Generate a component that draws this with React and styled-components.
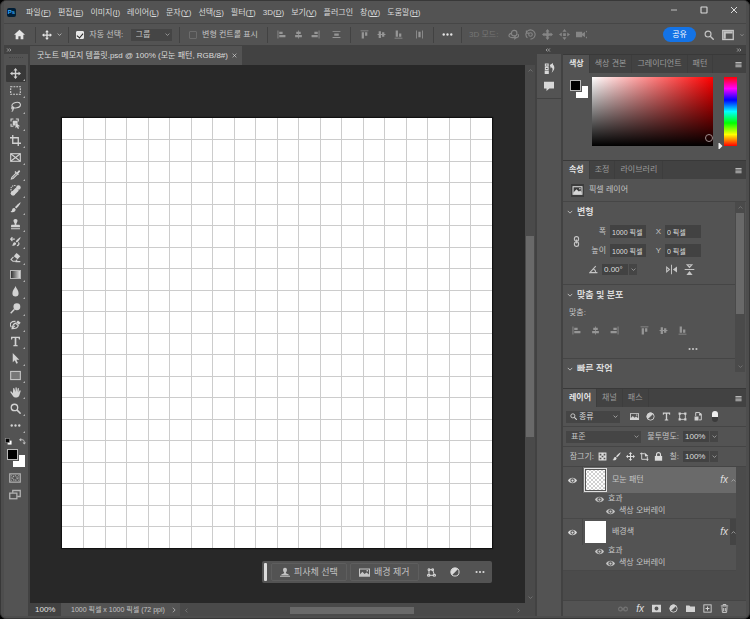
import { useState } from "react";
import styled, { createGlobalStyle, css } from "styled-components";

const line = { fill: "none", stroke: "currentColor", strokeWidth: 1.6 };

const glyphs = {
  home: <path d="M8 1 0 8.4h2.4V15h4v-4.4h3.2V15h4V8.4H16z" />,
  move: (
    <path d="M8 0 5 3.6h2v3.4H3.6V5L0 8l3.6 3V9H7v3.4H5L8 16l3-3.6H9V9h3.4v2L16 8l-3.6-3v2H9V3.6h2z" />
  ),
  marquee: <rect x="1" y="2.5" width="14" height="11" {...line} strokeDasharray="2.6 1.5" />,
  lasso: (
    <g {...line}>
      <ellipse cx="9" cy="6" rx="6.2" ry="4" transform="rotate(-12 9 6)" />
      <circle cx="4" cy="10" r="1.5" />
      <path d="M4 11.5c1 1.5 0 3-1.5 3.7" />
    </g>
  ),
  objectSelect: (
    <>
      <path d="M1.500 5V1.500H5M8.500 1.500H12V5M1.500 8.500V12H5" {...line} />
      <path d="M4 4h7v5L8 7v4H4z" />
      <path d="M8 6.500v8.500l2-1.800 1.500 2.800 1.800-1-1.500-2.700 3-.3z" />
    </>
  ),
  crop: <path d="M4 0v12h12M0 4h12v12" {...line} strokeWidth="1.900" />,
  frame: (
    <g {...line}>
      <rect x="1" y="2.500" width="14" height="11" />
      <path d="m1 2.500 14 11M15 2.500l-14 11" />
    </g>
  ),
  dropper: (
    <>
      <path d="M10 4.500 12.500 1.500c1-1 3 .8 2 2L12 6.200l1 1-1.500 1.500-5-5L8 2.400z" transform="translate(0 .5)" />
      <path d="m8.800 6-6 6-.8 2.500 2.500-.8 6-6" {...line} />
    </>
  ),
  healing: (
    <>
      <rect x="5.500" y="4.500" width="6" height="7" rx="1" transform="rotate(45 8 8)" />
      <circle cx="12.300" cy="3.700" r="3.300" />
      <circle cx="4.500" cy="12" r="3.500" />
      <path d="M8 1C4-.5-.5 4 2 8" {...line} strokeDasharray="2 1.200" />
    </>
  ),
  brush: (
    <path d="M15.500.5c-2 .8-6.800 5-8.200 7.300l1.700 1.700C11.500 7.800 15.200 3 15.500.500zM6.500 8.800c-2.300-.5-3.200 1-3.400 2.600C2.900 13 2 13.800.8 14c2.500 1.600 7.700.8 7.400-3.400z" />
  ),
  stamp: (
    <path d="M8 0C5.500 0 4.500 2 5.300 3.800L6.800 7v1.500H3c-1 0-1.500.7-1.500 1.500v2h13v-2c0-.8-.5-1.500-1.500-1.500H9.200V7l1.500-3.200C11.500 2 10.500 0 8 0zM1.500 13.300h13V15h-13z" />
  ),
  historyBrush: (
    <>
      <path d="M15.500 1.500c-2 .8-6 4.600-7.200 6.500L10 9.500c2.400-1.500 5.200-5.500 5.500-8zM7.300 9c-2-.3-2.600 1-2.800 2.200-.2 1.300-1 2-2 2.200 2 1.300 6.500.6 6.400-2.800z" />
      <path d="M1 4.500h6M3.500 1.500 1 4.500l2.500 3M12 9.500c2.500 2 0 4.500-2 4.500" {...line} />
    </>
  ),
  eraser: (
    <>
      <path d="M9.500 1.500 15 6l-4 4.500L5.500 6z" />
      <path d="M5 7 1.500 10.800 4.300 13.500h4L10.500 11M8 14h7" {...line} />
    </>
  ),
  drop: <path d="M8 0C6.500 4 3.500 6.500 3.500 10.500a4.500 4.800 0 0 0 9 0C12.500 6.500 9.500 4 8 0z" />,
  dodge: (
    <>
      <circle cx="10" cy="5.500" r="5" />
      <path d="M6.500 9 1 15" {...line} strokeWidth="2" />
    </>
  ),
  pen: (
    <>
      <path d="M3 14c1-4 1-7 5-8l4 3.500c-1 4-4 4.500-9 4.500zM3 14l4-4" {...line} />
      <path d="m9 5 2.500-3 4 3.500-2.500 3z" />
      <path d="M2 12C-2 6 3 3 8 3.500" {...line} />
    </>
  ),
  type: <path d="M1.500 1h13v4H13L12.300 2.900H9.200v10.200l2 .5V15H4.800v-1.400l2-.5V2.900H3.700L3 5H1.500z" />,
  arrow: <path d="M4 0v13.500l3-2.800 2.200 5 2.300-1-2.200-4.800H13.500z" />,
  rect: <rect x="1" y="2" width="14" height="12" fill="#777" stroke="currentColor" strokeWidth="1.4" />,
  hand: (
    <path d="M4.200 9 2 6.600C.8 5.800 0 7 .8 8l3.700 5.500C6 16 12 16.500 13.500 12.500L15.500 6c.3-1.200-1.200-1.600-1.700-.5L12.500 8 13 2.300c0-1.300-1.600-1.400-1.900-.1L10.300 7 9.800 1.200C9.600 0 8 0 8 1.200v5.900L6.300 2C5.800.8 4.300 1.300 4.600 2.500z" />
  ),
  search: (
    <g {...line} strokeWidth="1.900">
      <circle cx="6.500" cy="6.500" r="4.700" />
      <path d="m10 10 5.500 5.500" strokeWidth="2.300" />
    </g>
  ),
  dots: (
    <>
      <circle cx="2.500" cy="8" r="1.700" />
      <circle cx="8" cy="8" r="1.700" />
      <circle cx="13.500" cy="8" r="1.700" />
    </>
  ),
  defaults: (
    <>
      <rect x="6" y="6" width="9" height="9" fill="#fff" />
      <rect x="1.500" y="1.500" width="9" height="9" fill="#000" stroke="#aaa" />
    </>
  ),
  swap: (
    <>
      <path d="M4 4h3c4 0 5 2 5 6v1" {...line} strokeWidth="2" />
      <path d="M5 0v8L0 4zM8 10h8l-4 5z" />
    </>
  ),
  quickMask: (
    <>
      <rect x="1" y="2.500" width="14" height="11" {...line} />
      <circle cx="8" cy="8" r="3" {...line} strokeDasharray="1.500 1" />
      <path d="M3 5h1M3 8h1M3 11h1M12 5h1M12 8h1M12 11h1" {...line} />
    </>
  ),
  screenMode: (
    <g {...line} strokeWidth="1.700">
      <path d="M5 5V2h10v8h-4" />
      <rect x="1" y="5.500" width="9.500" height="7.500" />
    </g>
  ),
  alignLeft: <path d="M1 1h1.400v14H1zM4 3h6v4H4zM4 9h11v4H4z" />,
  alignCenter: <path d="M7.300 1h1.400v2H12v4H8.700v2H14v4H8.700v2H7.300v-2H2V9h5.300V7H4V3h3.300z" />,
  alignRight: <path d="M13.600 1H15v14h-1.400zM6 3h6v4H6zM1 9h11v4H1z" />,
  alignTop: <path d="M1 1h14v1.400H1zM3 4h4v11H3zM9 4h4v6H9z" />,
  alignMiddle: <path d="M1 7.300h2V2h4v5.300h2V4h4v3.300h2v1.400h-2V12H9V8.700H7V14H3V8.700H1z" />,
  alignBottom: <path d="M1 13.600h14V15H1zM3 1h4v11H3zM9 6h4v6H9z" />,
  spreadV: <path d="M1 2h14v1.400H1zM4 6h8v4H4zM1 12.600h14V14H1z" />,
  spreadH: <path d="M2 1h1.400v14H2zM6 3h4v10H6zM12.600 1H14v14h-1.400z" />,
  orbit: (
    <g {...line}>
      <circle cx="9" cy="6" r="4" />
      <path d="M5 6C0 8 0 12 6 12.500h7c3-1 3-4 1-5M9 10l3 2.500L9 15" />
    </g>
  ),
  roll: (
    <g {...line}>
      <circle cx="8" cy="8" r="2.600" />
      <path d="M3.500 13A6.700 6.700 0 1 1 8 14.700M2 2v4h4" />
    </g>
  ),
  slide: (
    <path d="M8 0 5 3.500h1.500L6.500 6 3.500 6.500V5L0 8l3.500 3V9.500l3 .5v2.500H5L8 16l3-3.500H9.500V10l3-.5V11L16 8l-3.500-3v1.500l-3-.5V3.500H11z" />
  ),
  drag3d: <path d="M8 0 5 4h6zM8 16l3-4H5zM0 8l4 3V5zM16 8l-4-3v6zM6 6h4v4H6z" />,
  camera: <path d="M0 4h9v3l4-3v8l-4-3v3H0zM14 4l2-2v3zM14 12l2 2v-3z" />,
  workspace: (
    <>
      <rect x="1" y="2" width="14" height="12" {...line} strokeWidth="1.800" />
      <path d="M2 3h12v3H2zM2 6h3v7H2z" />
    </>
  ),
  minimize: <path d="M2 8h12" {...line} />,
  maximize: <rect x="2" y="2" width="12" height="12" rx="1" {...line} strokeWidth="2.200" />,
  close: <path d="m2 2 12 12M14 2 2 14" {...line} strokeWidth="2" />,
  down: <path d="m2 5 6 6 6-6" {...line} strokeWidth="2" />,
  up: <path d="m2 11 6-6 6 6" {...line} strokeWidth="2" />,
  right: <path d="m5 2 6 6-6 6" {...line} strokeWidth="2" />,
  left: <path d="m11 2-6 6 6 6" {...line} strokeWidth="2" />,
  collapse: <path d="M7 4 3 8l4 4M13 4 9 8l4 4" {...line} strokeWidth="2" />,
  expand: <path d="m3 4 4 4-4 4M9 4l4 4-4 4" {...line} strokeWidth="2" />,
  menu: <path d="M1 2h14v3H1zM1 6h14v2H1zM1 9h14v2H1zM1 12h14v2H1z" />,
  history: (
    <>
      <path d="M2 1.500h4v3H2zM2 6.500h4v3H2z" {...line} />
      <path d="M1 11h6v5H1zM8.500 3 13 0v2c3 3 3 8-2 12 2-4 2-6 0-8l-1 2z" />
    </>
  ),
  comment: <path d="M0 1h16v11H8.500L4 16v-4H0z" />,
  image: (
    <path fillRule="evenodd" d="M0 2h16v12H0zm1.500 1.500v7L5 7l3 3 3-2 3.500 3V3.500zM11 4.500h2v2h-2z" />
  ),
  pixelLayer: (
    <>
      <rect x="1.500" y="2.500" width="13" height="11" {...line} />
      <path d="M2 13.500V11l4.500-5L10 9.500 12 8l2 2.500v3z" />
      <circle cx="11.500" cy="5.500" r="1.200" />
    </>
  ),
  link: (
    <g {...line} strokeWidth="1.700">
      <rect x="5" y="1" width="6" height="6.500" rx="2.800" />
      <rect x="5" y="8.500" width="6" height="6.500" rx="2.800" />
      <path d="M8 5v6" />
    </g>
  ),
  linkH: (
    <g {...line} strokeWidth="1.700">
      <rect x="1" y="5" width="6" height="6" rx="2.800" />
      <rect x="9" y="5" width="6" height="6" rx="2.800" />
      <path d="M5 8h6" />
    </g>
  ),
  angle: <path d="M12 2 1.500 13.500H15M8 7c2.500 1 4 3 4 6.500" {...line} strokeWidth="1.900" />,
  flipH: (
    <>
      <path d="M7.300 1h1.400v14H7.300zM10 8l6-4.500v9z" />
      <path d="M1 4.500v7L5 8z" {...line} />
    </>
  ),
  flipV: (
    <>
      <path d="M1 7.300h14v1.400H1zM8 10l4.500 6h-9z" />
      <path d="M4.500 1h7L8 5z" {...line} />
    </>
  ),
  adjust: (
    <>
      <circle cx="8" cy="8" r="6.500" {...line} />
      <path d="M12.600 3.400A6.500 6.500 0 0 0 3.400 12.600z" />
    </>
  ),
  shape: (
    <>
      <rect x="3" y="3" width="10" height="10" {...line} />
      <path d="M1 1h4v4H1zM11 1h4v4h-4zM1 11h4v4H1zM11 11h4v4h-4z" />
    </>
  ),
  smart: (
    <>
      <path d="M3 7V1h7l3 3v10H9" {...line} strokeWidth="1.700" />
      <path d="M1 8h7v7H1zM9 2h4v4H9z" />
    </>
  ),
  checker: <path d="M1 1h14v14H1zM3 3v3h3V3zm7 0v3h3V3zM6.500 6.500v3h3v-3zM3 10v3h3v-3zm7 0v3h3v-3z" fillRule="evenodd" />,
  artboard: (
    <>
      <path d="M3 1v12h12M0 3h8M13 8v8" {...line} />
      <path d="m8 1 7 6-6 1z" />
    </>
  ),
  lock: (
    <>
      <path d="M1.500 7h13v8.500h-13z" />
      <path d="M4.500 7V4.500a3.500 3.500 0 0 1 7 0V7" {...line} strokeWidth="2" />
    </>
  ),
  eye: (
    <path
      fillRule="evenodd"
      d="M0 8c3.500-6.500 12.500-6.500 16 0-3.500 6.500-12.500 6.500-16 0zm8-3.800a3.800 3.800 0 1 0 0 7.600 3.800 3.800 0 0 0 0-7.600zM8 6a2 2 0 1 1 0 4 2 2 0 0 1 0-4z"
    />
  ),
  mask: <path fillRule="evenodd" d="M0 1.500h16v13H0zM8 4.500a3.500 3.500 0 1 0 0 7 3.500 3.500 0 0 0 0-7z" />,
  folder: <path d="M0 2.500h6l1.500 2H16V14H0z" />,
  add: (
    <g {...line}>
      <rect x="1.500" y="1.500" width="13" height="13" />
      <path d="M8 4.500v7M4.500 8h7" strokeWidth="1.800" />
    </g>
  ),
  trash: (
    <>
      <path d="M1.500 3.500h13M5.500 3V1h5v2" {...line} strokeWidth="1.700" />
      <path d="M3.500 5.500 4.300 15h7.400l.8-9.500M6.500 7v6M9.500 7v6" {...line} />
    </>
  ),
  person: <path d="M8 1C5.500 1 4.500 3 5 5.500c.2 1.500 1 2.500 1.500 3V10L2 12v1h12v-1l-4.500-2V8.500c.5-.5 1.300-1.500 1.500-3C11.500 3 10.500 1 8 1zM0 14h16v1.500H0z" />,
  transform: (
    <g {...line} strokeWidth="1.700">
      <path d="M3.500 3v10M3 13h10M4 3h6l3 9" />
      <path d="M1 11.500h4v3H1zM11 11.500h4v3h-4z" />
      <path d="M2 1.500h3v3H2zM8.500 1.500h3v3h-3z" />
    </g>
  ),
};

function Icon({ name, size = 12 }) {
  return (
    <Glyph viewBox="0 0 16 16" width={size} height={size} aria-hidden="true">
      {glyphs[name]}
    </Glyph>
  );
}

const menus = [
  ["파일", "F"],
  ["편집", "E"],
  ["이미지", "I"],
  ["레이어", "L"],
  ["문자", "Y"],
  ["선택", "S"],
  ["필터", "T"],
  ["3D", "D"],
  ["보기", "V"],
  ["플러그인"],
  ["창", "W"],
  ["도움말", "H"],
];

const tools = [
  "move", "marquee", "lasso", "objectSelect", "crop", "frame", "dropper", "healing",
  "brush", "stamp", "historyBrush", "eraser", "gradient", "drop", "dodge", "pen",
  "type", "arrow", "rect", "hand", "search", "dots",
];

const horizontalAlign = ["alignLeft", "alignCenter", "alignRight"];
const verticalAlign = ["alignTop", "alignMiddle", "alignBottom"];
const steps = Array.from({ length: 19 }, (_, i) => `${(i + 1) * 5}%`);

function Dropdown({ label, value, width, grow }) {
  return (
    <SelectBox $w={width} $grow={grow}>
      <Select aria-label={label}>
        <option>{value}</option>
      </Select>
      <Icon name="down" size={5} />
    </SelectBox>
  );
}

function Stepper({ label, value }) {
  return (
    <StepBox>
      <Field aria-label={label} defaultValue={value} $w={26} $large />
      <StepButton aria-label={`${label} 목록`}>
        <Icon name="down" size={5} />
      </StepButton>
    </StepBox>
  );
}

function PanelTabs({ names }) {
  const [active, setActive] = useState(names[0]);
  return (
    <Tabs>
      {names.map((n) => (
        <Tab key={n} $on={n === active} onClick={() => setActive(n)}>
          {n}
        </Tab>
      ))}
      <TabMenu aria-label="패널 메뉴">
        <Icon name="menu" size={7} />
      </TabMenu>
    </Tabs>
  );
}

function Layer({ name, selected, pattern }) {
  return (
    <LayerItem>
      <LayerRow>
        <EyeCell aria-label={`${name} 표시`}>
          <Icon name="eye" size={9} />
        </EyeCell>
        <LayerMain $on={selected}>
          <Thumb $on={selected} $pattern={pattern} />
          <LayerName>{name}</LayerName>
          <Fx>fx</Fx>
        </LayerMain>
        <LayerFold $on={selected} aria-label="효과 접기">
          <Icon name="up" size={5} />
        </LayerFold>
      </LayerRow>
      <Effects>
        <Effect>
          <Icon name="eye" size={9} />
          효과
        </Effect>
        <Effect $sub>
          <Icon name="eye" size={9} />
          색상 오버레이
        </Effect>
      </Effects>
    </LayerItem>
  );
}

export default function App() {
  const [tool, setTool] = useState("move");

  return (
    <Window>
      <Reset />
      <TitleBar>
        <Logo>Ps</Logo>
        <MenuBar>
          {menus.map(([name, key]) => (
            <MenuItem key={name}>
              {name}
              {key && <>(<u>{key}</u>)</>}
            </MenuItem>
          ))}
        </MenuBar>
        <WindowButtons>
          <PlainButton aria-label="최소화"><Icon name="minimize" size={8} /></PlainButton>
          <PlainButton aria-label="최대화"><Icon name="maximize" size={8} /></PlainButton>
          <PlainButton aria-label="닫기"><Icon name="close" size={8} /></PlainButton>
        </WindowButtons>
      </TitleBar>

      <OptionsBar>
        <Group $w={32} $bright>
          <PlainButton aria-label="홈"><Icon name="home" size={11} /></PlainButton>
        </Group>
        <Group $w={33} $bright>
          <Icon name="move" size={10} />
          <Icon name="down" size={5} />
        </Group>
        <Group $w={111}>
          <CheckLabel>
            <Check type="checkbox" defaultChecked />
            자동 선택:
          </CheckLabel>
          <Dropdown label="자동 선택" value="그룹" width={41} />
        </Group>
        <Group $w={88}>
          <CheckLabel>
            <Check type="checkbox" />
            변형 컨트롤 표시
          </CheckLabel>
        </Group>
        <AlignGroup $w={83}>
          {[...horizontalAlign, "spreadV"].map((n) => (
            <PlainButton key={n} aria-label={n}><Icon name={n} size={9} /></PlainButton>
          ))}
        </AlignGroup>
        <AlignGroup $w={83}>
          {[...verticalAlign, "spreadH"].map((n) => (
            <PlainButton key={n} aria-label={n}><Icon name={n} size={9} /></PlainButton>
          ))}
        </AlignGroup>
        <Group $w={28} $bright>
          <PlainButton aria-label="더 보기"><Icon name="dots" size={11} /></PlainButton>
        </Group>
        <Modes>
          <Faint>3D 모드:</Faint>
          {["orbit", "roll", "slide", "drag3d", "camera"].map((n) => (
            <PlainButton key={n} aria-label={n}><Icon name={n} size={11} /></PlainButton>
          ))}
        </Modes>
        <Share>공유</Share>
        <PlainButton aria-label="검색"><Icon name="search" size={10} /></PlainButton>
        <PlainButton aria-label="작업 영역"><Icon name="workspace" size={12} /></PlainButton>
        <Icon name="down" size={4} />
      </OptionsBar>

      <Workspace>
        <ToolPanel>
          <Strip><Icon name="expand" size={6} /></Strip>
          <Grip />
          <ToolList>
            {tools.map((t) => (
              <Tool key={t} $on={t === tool} onClick={() => setTool(t)} aria-label={t}>
                {t === "gradient" ? <GradientIcon /> : <Icon name={t} size={11} />}
              </Tool>
            ))}
          </ToolList>
          <SwatchHead>
            <Icon name="defaults" size={7} />
            <Icon name="swap" size={7} />
          </SwatchHead>
          <Swatches />
          <ModeButton aria-label="빠른 마스크"><Icon name="quickMask" size={12} /></ModeButton>
          <ModeButton aria-label="화면 모드"><Icon name="screenMode" size={12} /></ModeButton>
        </ToolPanel>

        <Document>
          <DocTabs>
            <DocTab>
              굿노트 메모지 템플릿.psd @ 100% (모눈 패턴, RGB/8#)
              <PlainButton aria-label="문서 닫기"><Icon name="close" size={5} /></PlainButton>
            </DocTab>
          </DocTabs>
          <CanvasRow>
            <Stage>
              <Artboard>
                {steps.map((s) => (
                  <g key={s} stroke="#cccccc" shapeRendering="crispEdges">
                    <line x1={s} x2={s} y1="0" y2="100%" />
                    <line y1={s} y2={s} x1="0" x2="100%" />
                  </g>
                ))}
              </Artboard>
              <TaskBar>
                <TaskGrip />
                <TaskButton><Icon name="person" size={10} />피사체 선택</TaskButton>
                <TaskButton><Icon name="image" size={11} />배경 제거</TaskButton>
                <TaskIcons>
                  <PlainButton aria-label="변형"><Icon name="transform" size={9} /></PlainButton>
                  <PlainButton aria-label="조정"><Icon name="adjust" size={10} /></PlainButton>
                  <PlainButton aria-label="옵션"><Icon name="dots" size={10} /></PlainButton>
                </TaskIcons>
              </TaskBar>
            </Stage>
            <VTrack $pad={161}>
              <Icon name="up" size={5} />
              <VThumb $h={201} />
              <Icon name="down" size={5} />
            </VTrack>
          </CanvasRow>
          <StatusBar>
            <Zoom>100%</Zoom>
            <Info>
              1000 픽셀 x 1000 픽셀 (72 ppi)
              <Icon name="right" size={6} />
            </Info>
            <HTrack>
              <Icon name="left" size={5} />
              <HThumb />
              <Icon name="right" size={5} />
            </HTrack>
          </StatusBar>
        </Document>

        <Dock>
          <Strip $center><Icon name="collapse" size={6} /></Strip>
          <DockIcons>
            <PlainButton aria-label="작업 내역"><Icon name="history" size={11} /></PlainButton>
            <PlainButton aria-label="댓글"><Icon name="comment" size={10} /></PlainButton>
          </DockIcons>
        </Dock>

        <Panels>
          <Strip $end><Icon name="expand" size={6} /></Strip>

          <PanelTabs names={["색상", "색상 견본", "그레이디언트", "패턴"]} />
          <ColorBody>
            <Swatches />
            <ColorField><Picker /></ColorField>
            <HuePointer viewBox="0 0 4 6"><path d="M0 0h1l3 3-3 3H0z" /></HuePointer>
            <Hue />
          </ColorBody>

          <PanelTabs names={["속성", "조정", "라이브러리"]} />
          <KindRow>
            <KindIcon><Icon name="pixelLayer" size={11} /></KindIcon>
            픽셀 레이어
          </KindRow>
          <Properties>
            <Sections>
              <Section>
                <SectionTitle><Icon name="down" size={6} />변형</SectionTitle>
                <TransformGrid>
                  <LinkCell><Icon name="link" size={11} /></LinkCell>
                  <label htmlFor="w">폭</label>
                  <Field id="w" defaultValue="1000 픽셀" />
                  <label htmlFor="x">X</label>
                  <Field id="x" defaultValue="0 픽셀" />
                  <label htmlFor="h">높이</label>
                  <Field id="h" defaultValue="1000 픽셀" />
                  <label htmlFor="y">Y</label>
                  <Field id="y" defaultValue="0 픽셀" />
                </TransformGrid>
                <AngleRow>
                  <Icon name="angle" size={9} />
                  <Stepper label="각도" value="0.00°" />
                  <Flips>
                    <PlainButton aria-label="가로로 뒤집기"><Icon name="flipH" size={11} /></PlainButton>
                    <PlainButton aria-label="세로로 뒤집기"><Icon name="flipV" size={11} /></PlainButton>
                  </Flips>
                </AngleRow>
              </Section>
              <Section>
                <SectionTitle><Icon name="down" size={6} />맞춤 및 분포</SectionTitle>
                <AlignLabel>맞춤:</AlignLabel>
                <AlignRow>
                  {horizontalAlign.map((n) => (
                    <PlainButton key={n} aria-label={n}><Icon name={n} size={9} /></PlainButton>
                  ))}
                  <Spacer />
                  {verticalAlign.map((n) => (
                    <PlainButton key={n} aria-label={n}><Icon name={n} size={9} /></PlainButton>
                  ))}
                </AlignRow>
                <MoreRow>
                  <PlainButton aria-label="더 보기"><Icon name="dots" size={10} /></PlainButton>
                </MoreRow>
              </Section>
              <Section>
                <SectionTitle><Icon name="down" size={6} />빠른 작업</SectionTitle>
              </Section>
            </Sections>
            <VTrack $pad={1}>
              <Icon name="up" size={5} />
              <VThumb $h={101} />
              <Icon name="down" size={5} />
            </VTrack>
          </Properties>

          <PanelTabs names={["레이어", "채널", "패스"]} />
          <LayerTools>
            <FilterBox>
              <Icon name="search" size={7} />
              <Dropdown label="필터" value="종류" grow />
            </FilterBox>
            <FilterIcons>
              {["image", "adjust", "type", "shape", "smart"].map((n) => (
                <PlainButton key={n} aria-label={n}><Icon name={n} size={9} /></PlainButton>
              ))}
            </FilterIcons>
            <Toggle aria-label="필터 켜기" />
          </LayerTools>
          <LayerTools>
            <Dropdown label="혼합 모드" value="표준" width={75} />
            <ValueLabel $w={34}>불투명도:</ValueLabel>
            <Stepper label="불투명도" value="100%" />
          </LayerTools>
          <LayerTools>
            <ValueLabel $w={28}>잠그기:</ValueLabel>
            <LockIcons>
              {["checker", "brush", "move", "artboard", "lock"].map((n) => (
                <PlainButton key={n} aria-label={n}><Icon name={n} size={9} /></PlainButton>
              ))}
            </LockIcons>
            <ValueLabel $w={12}>칠:</ValueLabel>
            <Stepper label="칠" value="100%" />
          </LayerTools>
          <LayerArea>
            <LayerList>
              <Layer name="모눈 패턴" selected pattern />
              <Layer name="배경색" />
            </LayerList>
          </LayerArea>
          <LayerFooter>
            <Faint><Icon name="linkH" size={10} /></Faint>
            <FooterFx>fx</FooterFx>
            {["mask", "adjust", "folder", "add", "trash"].map((n) => (
              <PlainButton key={n} aria-label={n}><Icon name={n} size={9} /></PlainButton>
            ))}
          </LayerFooter>
        </Panels>
      </Workspace>
    </Window>
  );
}

const Reset = createGlobalStyle`
  * {
    box-sizing: border-box;
  }
  body {
    margin: 0;
    background: #000;
  }
  button, input, select {
    font: inherit;
    color: inherit;
    border: 0;
    padding: 0;
    margin: 0;
    background: none;
    border-radius: 0;
    appearance: none;
  }
  button {
    cursor: pointer;
  }
`;

const Glyph = styled.svg`
  display: block;
  flex: none;
  fill: currentColor;
`;

const Window = styled.div`
  min-height: 100vh;
  display: flex;
  flex-direction: column;
  padding: 0 3px 2px;
  border: 1px solid #383838;
  border-radius: 6px;
  overflow: hidden;
  background: #4d4d4d;
  color: #c4c4c4;
  font-family: "Liberation Sans", "Noto Sans CJK KR", sans-serif;
  font-size: 8px;
  line-height: 12px;
  white-space: nowrap;
`;

const TitleBar = styled.header`
  height: 22px;
  flex: none;
  display: flex;
  align-items: center;
  background: #535353;
  padding: 1px 0 0 3px;
`;

const Logo = styled.div`
  width: 9px;
  height: 9px;
  border-radius: 2px;
  background: #001e36;
  color: #31a8ff;
  font-size: 6px;
  font-weight: bold;
  line-height: 9px;
  text-align: center;
`;

const MenuBar = styled.nav`
  display: flex;
  gap: 7px;
  margin-left: 10px;
`;

const MenuItem = styled.button`
  color: #dadada;
`;

const WindowButtons = styled.div`
  display: flex;
  gap: 22px;
  margin-left: auto;
  padding: 0 8px 5px 0;
  color: #dcdcdc;
`;

const PlainButton = styled.button`
  display: flex;
  align-items: center;
  justify-content: center;
`;

const OptionsBar = styled.div`
  height: 23px;
  flex: none;
  display: flex;
  align-items: center;
  background: #535353;
  border-top: 1px solid #464646;
  border-bottom: 1px solid #424242;
  padding-right: 2px;

  > ${PlainButton} {
    margin-left: 8px;
  }
  > ${Glyph} {
    margin-left: 6px;
  }
`;

const Group = styled.div`
  width: ${(p) => p.$w}px;
  height: 16px;
  flex: none;
  display: flex;
  align-items: center;
  justify-content: space-evenly;
  border-right: 1px solid #424242;
  color: ${(p) => (p.$bright ? "#e4e4e4" : "#c4c4c4")};
`;

const AlignGroup = styled(Group)`
  justify-content: flex-start;
  gap: 8px;
  padding: 0 9px;
  color: #969696;

  > :last-child {
    margin-left: auto;
  }
`;

const CheckLabel = styled.label`
  display: flex;
  align-items: center;
  gap: 5px;
`;

const Check = styled.input`
  width: 8px;
  height: 8px;
  border: 1px solid #6c6c6c;
  border-radius: 1px;
  display: flex;
  justify-content: center;

  &:checked {
    background: #e6e6e6;
    border-color: #e6e6e6;
  }
  &:checked::after {
    content: "";
    width: 3px;
    height: 5px;
    border: solid #222;
    border-width: 0 1px 1px 0;
    transform: rotate(40deg);
  }
`;

const SelectBox = styled.div`
  width: ${(p) => (p.$grow ? "auto" : `${p.$w}px`)};
  flex: ${(p) => (p.$grow ? 1 : "none")};
  height: 12px;
  display: flex;
  align-items: center;
  background: #454545;
  padding: 0 2px 0 5px;
`;

const Select = styled.select`
  flex: 1;
  min-width: 0;
  height: 12px;
  line-height: 12px;
`;

const Modes = styled.div`
  display: flex;
  align-items: center;
  gap: 6px;
  padding-left: 7px;
  color: #858585;
`;

const Faint = styled.span`
  color: #757575;
  margin-right: 4px;
`;

const Share = styled.button`
  width: 33px;
  height: 15px;
  border-radius: 8px;
  background: #1473e6;
  color: #fff;
  margin-left: auto;
`;

const Workspace = styled.main`
  flex: 1;
  display: flex;
  background: #424242;
`;

const Strip = styled.div`
  height: 8px;
  flex: none;
  display: flex;
  align-items: center;
  justify-content: ${(p) => (p.$end ? "flex-end" : p.$center ? "center" : "flex-start")};
  background: #424242;
  padding: 0 4px 0 2px;
`;

const ToolPanel = styled.aside`
  width: 24px;
  flex: none;
  display: flex;
  flex-direction: column;
  background: #535353;
`;

const Grip = styled.div`
  height: 3px;
  margin: 3px 5px 5px;
  border-top: 1px dotted #444;
`;

const ToolList = styled.div`
  height: 369px;
  display: grid;
  grid-auto-rows: 1fr;
  padding: 0 2px;
`;

const Tool = styled.button`
  display: flex;
  align-items: center;
  padding-left: 4px;
  border-radius: 1px;
  background: ${(p) => (p.$on ? "#383838" : "none")};
  color: #d2d2d2;

  &::after {
    content: "";
    align-self: flex-end;
    margin: 0 0 1px 2px;
    border: 1px solid;
    border-color: transparent #b0b0b0 #b0b0b0 transparent;
  }
`;

const GradientIcon = styled.span`
  width: 11px;
  height: 9px;
  border: 1px solid #b5b5b5;
  background: linear-gradient(90deg, #333, #ddd);
`;

const SwatchHead = styled.div`
  display: flex;
  justify-content: space-between;
  padding: 4px 2px 2px 1px;
`;

const Swatches = styled.div`
  width: 18px;
  height: 18px;
  flex: none;
  margin: 2px 2px 2px 3px;
  background:
    linear-gradient(#000, #000) 1px 1px / 9px 9px no-repeat,
    linear-gradient(#b8b8b8, #b8b8b8) 0 0 / 11px 11px no-repeat,
    linear-gradient(#535353, #535353) 0 0 / 12px 12px no-repeat,
    linear-gradient(#fff, #fff) 6px 6px / 12px 12px no-repeat;
`;

const ModeButton = styled.button`
  height: 17px;
  display: flex;
  align-items: center;
  padding-left: 5px;
  color: #b4b4b4;
`;

const Document = styled.section`
  flex: 1;
  min-width: 0;
  display: flex;
  flex-direction: column;
  margin: 0 2px;
`;

const DocTabs = styled.div`
  height: 19px;
  flex: none;
  display: flex;
`;

const DocTab = styled.div`
  display: flex;
  align-items: center;
  gap: 4px;
  padding: 0 5px 0 7px;
  background: #535353;
  color: #dcdcdc;
`;

const CanvasRow = styled.div`
  flex: 1;
  display: flex;
`;

const Stage = styled.div`
  flex: 1;
  display: flex;
  flex-direction: column;
  align-items: flex-end;
  background: #282828;
  padding: 53px 33px 20px 32px;
`;

const Artboard = styled.svg`
  width: 100%;
  aspect-ratio: 1;
  background: #fff;
  box-shadow: 0 0 1px 1px #111;
`;

const TaskBar = styled.div`
  height: 22px;
  width: 230px;
  display: flex;
  align-items: center;
  gap: 3px;
  margin-top: 13px;
  padding: 0 2px;
  border-radius: 2px;
  background: #535353;
`;

const TaskGrip = styled.div`
  width: 3px;
  height: 18px;
  border-radius: 1px;
  background: #dcdcdc;
  margin-right: 1px;
`;

const TaskButton = styled.button`
  height: 18px;
  display: flex;
  align-items: center;
  gap: 4px;
  padding: 0 8px;
  border: 1px solid #5e5e5e;
  border-radius: 2px;
  font-size: 9px;
`;

const TaskIcons = styled.div`
  flex: 1;
  display: flex;
  justify-content: space-between;
  padding: 0 5px;
  color: #dadada;
`;

const VTrack = styled.div`
  width: 10px;
  flex: none;
  display: flex;
  flex-direction: column;
  align-items: center;
  padding: 3px 0;
  background: #4a4a4a;
  color: #8a8a8a;

  > :nth-child(2) {
    margin-top: ${(p) => p.$pad + 2}px;
  }
  > :last-child {
    margin-top: auto;
  }
`;

const VThumb = styled.div`
  width: 8px;
  height: ${(p) => p.$h}px;
  background: #696969;
`;

const StatusBar = styled.footer`
  height: 13px;
  flex: none;
  display: flex;
  align-items: stretch;
  background: #4a4a4a;
  line-height: 14px;
`;

const Zoom = styled.div`
  width: 31px;
  padding-left: 5px;
  background: #424242;
  color: #e0e0e0;
`;

const Info = styled.div`
  width: 119px;
  display: flex;
  align-items: center;
  justify-content: space-between;
  padding: 1px 3px 0 10px;
  background: #535353;
  font-size: 7px;
`;

const HTrack = styled.div`
  flex: 1;
  display: flex;
  align-items: center;
  padding: 1px 14px 0 4px;
  color: #8a8a8a;

  > :last-child {
    margin-left: auto;
  }
`;

const HThumb = styled.div`
  width: 124px;
  height: 7px;
  margin-left: 101px;
  background: #696969;
`;

const Dock = styled.aside`
  width: 24px;
  flex: none;
  margin-right: 2px;
  background: #535353;
`;

const DockIcons = styled.div`
  display: flex;
  flex-direction: column;
  align-items: center;
  gap: 7px;
  padding: 9px 0 7px;
  border-bottom: 1px solid #424242;
  color: #d8d8d8;
`;

const Panels = styled.aside`
  width: 183px;
  flex: none;
  display: flex;
  flex-direction: column;
  background: #535353;
`;

const Tabs = styled.div`
  height: 19px;
  flex: none;
  display: flex;
  background: #424242;
  border-top: 1px solid #393939;
`;

const Tab = styled.button`
  padding: 0 5px;
  border-right: 1px solid #3d3d3d;
  color: #9c9c9c;
  ${(p) =>
    p.$on &&
    css`
      padding-left: 6px;
      background: #535353;
      color: #e6e6e6;
      font-weight: bold;
    `}
`;

const TabMenu = styled(PlainButton)`
  margin-left: auto;
  padding-right: 4px;
  color: #b8b8b8;
`;

const ColorBody = styled.div`
  height: 87px;
  flex: none;
  display: flex;
  align-items: flex-start;
  padding: 4px 9px 0 4px;

  ${Swatches} {
    margin-top: 3px;
  }
`;

const ColorField = styled.div`
  flex: 1;
  height: 69px;
  margin-left: 2px;
  display: flex;
  align-items: flex-end;
  justify-content: flex-end;
  background: linear-gradient(transparent, #000), linear-gradient(90deg, #fff, #f00);
`;

const Picker = styled.div`
  width: 8px;
  height: 8px;
  margin-bottom: 4px;
  border: 1px solid #a09090;
  border-radius: 50%;
`;

const HuePointer = styled.svg`
  width: 5px;
  height: 6px;
  margin: 66px 1px 0 5px;
  fill: #eee;
`;

const Hue = styled.div`
  width: 13px;
  height: 69px;
  background: linear-gradient(#f00, #f0f, #00f, #0ff, #0f0, #ff0, #f00);
`;

const KindRow = styled.div`
  height: 23px;
  flex: none;
  display: flex;
  align-items: center;
  gap: 5px;
  padding-left: 8px;
  border-bottom: 1px solid #464646;
`;

const KindIcon = styled.span`
  padding: 1px;
  background: #3c3c3c;
  color: #d6d6d6;
`;

const Properties = styled.div`
  height: 170px;
  flex: none;
  display: flex;
  margin: 0 1px 16px 0;
  overflow: hidden;
`;

const Sections = styled.div`
  flex: 1;
`;

const Section = styled.section`
  border-bottom: 1px solid #454545;
`;

const SectionTitle = styled.h3`
  display: flex;
  align-items: center;
  gap: 4px;
  margin: 0;
  padding: 4px 0 3px 4px;
  font-size: 9px;
  color: #dadada;
`;

const TransformGrid = styled.div`
  display: grid;
  grid-template-columns: 12px 19px 36px 11px 36px;
  grid-auto-rows: 13px;
  gap: 6px 4px;
  padding: 4px 0 0 8px;
  line-height: 14px;
  text-align: right;
`;

const LinkCell = styled.div`
  grid-row: span 2;
  display: flex;
  align-items: center;
`;

const Field = styled.input`
  width: ${(p) => (p.$w ? `${p.$w}px` : "100%")};
  height: 100%;
  padding-left: 2px;
  background: #424242;
  color: #dedede;
  font-size: ${(p) => (p.$large ? 8 : 7)}px;
`;

const AngleRow = styled.div`
  display: flex;
  align-items: center;
  gap: 4px;
  padding: 7px 0 9px 26px;
`;

const Flips = styled.div`
  display: flex;
  gap: 7px;
  margin-left: 25px;
`;

const StepBox = styled.div`
  height: 11px;
  display: flex;
  gap: 1px;
`;

const StepButton = styled(PlainButton)`
  width: 8px;
  background: #454545;
`;

const AlignLabel = styled.div`
  padding: 3px 6px 0;
`;

const AlignRow = styled.div`
  display: flex;
  gap: 10px;
  padding: 7px 9px 0;
  color: #969696;
`;

const Spacer = styled.span`
  width: 1px;
`;

const MoreRow = styled.div`
  display: flex;
  justify-content: flex-end;
  padding: 9px 37px 4px 0;
`;

const LayerTools = styled.div`
  height: 20px;
  flex: none;
  display: flex;
  align-items: center;
  gap: 4px;
  padding: 0 3px;
  border-bottom: 1px solid #454545;
`;

const FilterBox = styled.div`
  width: 54px;
  display: flex;
  align-items: center;
  padding-left: 4px;
  background: #454545;
  color: #dcdcdc;

  ${SelectBox} {
    padding-left: 2px;
  }
`;

const FilterIcons = styled.div`
  display: flex;
  gap: 7px;
  margin-left: 6px;
  color: #d2d2d2;
`;

const Toggle = styled.button`
  width: 6px;
  height: 11px;
  margin-left: 5px;
  border-radius: 3px;
  background: linear-gradient(#eee 6px, #3b3b3b 6px);
`;

const ValueLabel = styled.span`
  width: ${(p) => p.$w}px;
  display: flex;
  justify-content: flex-end;
`;

const LockIcons = styled.div`
  display: flex;
  gap: 5px;
  color: #dcdcdc;
`;

const LayerArea = styled.div`
  flex: 1;
  min-height: 133px;
  background: #4b4b4b;
  padding-right: 10px;
`;

const LayerList = styled.ul`
  margin: 0;
  padding: 0;
  list-style: none;
`;

const LayerItem = styled.li`
  background: #535353;
  border-bottom: 1px solid #484848;
`;

const LayerRow = styled.div`
  height: 26px;
  display: flex;
`;

const EyeCell = styled(PlainButton)`
  width: 20px;
  flex: none;
  border-right: 1px solid #484848;
  color: #dadada;
`;

const LayerMain = styled.div`
  flex: 1;
  display: flex;
  align-items: center;
  padding: 0 2px 0 1px;
  background: ${(p) => (p.$on ? "#6a6a6a" : "none")};
`;

const Thumb = styled.div`
  width: 23px;
  height: 24px;
  border: 1px solid ${(p) => (p.$on ? "#e0e0e0" : "#535353")};
  background: #fff;
  ${(p) =>
    p.$pattern &&
    css`
      background: repeating-conic-gradient(#fff 0 25%, #cfcfcf 0 50%) 0 0 / 4px 4px;
      box-shadow: inset 0 0 0 1px #555;
    `}
`;

const LayerName = styled.span`
  flex: 1;
  padding-left: 5px;
`;

const Fx = styled.em`
  color: #dedede;
  font-family: "Liberation Sans", sans-serif;
  font-size: 10px;
`;

const LayerFold = styled(PlainButton)`
  width: 6px;
  background: ${(p) => (p.$on ? "#6a6a6a" : "#444")};
`;

const Effects = styled.div`
  margin-left: 20px;
  padding-bottom: 1px;
`;

const Effect = styled.div`
  display: flex;
  align-items: center;
  gap: 4px;
  padding-left: ${(p) => (p.$sub ? 23 : 12)}px;
`;

const LayerFooter = styled.footer`
  height: 16px;
  flex: none;
  display: flex;
  align-items: center;
  justify-content: flex-end;
  gap: 8px;
  padding-right: 17px;
  border-top: 1px solid #454545;
  color: #d2d2d2;

  ${Faint} {
    margin: 0;
  }
`;

const FooterFx = styled(Fx)`
  line-height: 12px;
`;
